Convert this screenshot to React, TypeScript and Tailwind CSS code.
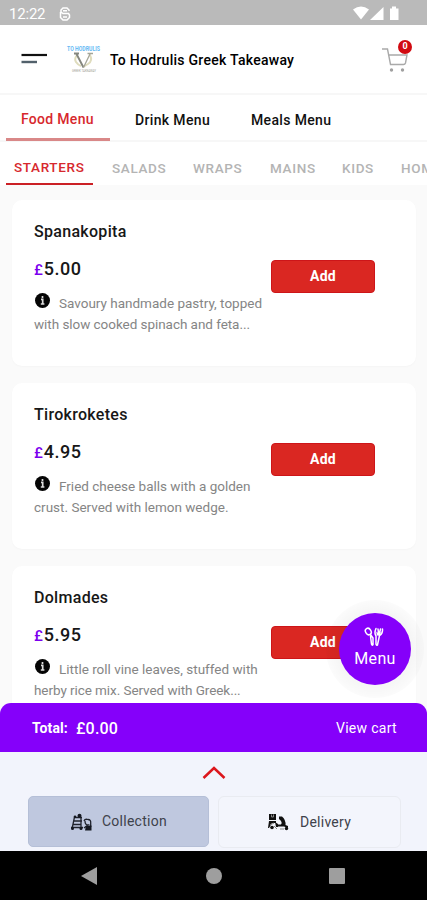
import React from "react";

type Dish = { name: string; price: string; lines: [string, string]; second: string };

const dishes: Dish[] = [
  {
    name: "Spanakopita",
    price: "5.00",
    lines: ["Savoury handmade pastry, topped", "with slow cooked spinach and feta..."],
    second: "tracking-[-0.05px]",
  },
  {
    name: "Tirokroketes",
    price: "4.95",
    lines: ["Fried cheese balls with a golden", "crust. Served with lemon wedge."],
    second: "tracking-normal",
  },
  {
    name: "Dolmades",
    price: "5.95",
    lines: ["Little roll vine leaves, stuffed with", "herby rice mix. Served with Greek..."],
    second: "tracking-[-0.07px]",
  },
];

function StatusBar() {
  return (
    <div className="flex h-[25px] shrink-0 items-center bg-[#bababa] pt-[2px] pl-[9px] text-white">
      <span className="w-[50px] text-[15px] leading-5 tracking-[-0.2px]">12:22</span>
      <svg width="12" height="14" viewBox="0 0 12 14" fill="none" stroke="#fff" strokeWidth="1.5">
        <path d="M10 4V3L8 1H4L2 3V5L4 6.5H9.5L10.5 8V10.5L8 13H4L1.5 10.5V5M4 3.8H8M4 10H8" />
      </svg>
      <svg className="ml-[282px]" width="48" height="15" viewBox="0 0 48 15" fill="#fff">
        <path d="M0 3.5Q8-2.5 16 3.5L8 13.5ZM17 14 30.5 1V14ZM37 2.5H39V.5H43V2.5H45.5V14H37Z" />
      </svg>
    </div>
  );
}

function Logo() {
  return (
    <svg className="ml-[19px] overflow-visible" width="36" height="30" viewBox="0 0 36 30">
      <text x="1" y="7" textLength="33" lengthAdjust="spacingAndGlyphs" fontSize="7" fontWeight="700" fill="#67baf4" fontFamily="Roboto, sans-serif">TO HODRULIS</text>
      <g fill="none">
        <path d="M11 11Q8 15 10 18Q12 21 15 22M24 11Q27 17 22 20L17 23" stroke="#dfdcbd" strokeWidth="2" />
        <path d="M8 9.5H13M10.5 10 17.5 23.5" stroke="#85877f" strokeWidth="1.9" />
        <path d="M17.5 23.5 24 10M21.5 9.5H27" stroke="#a4a598" strokeWidth="1.3" />
      </g>
      <text x="6" y="28" textLength="24" lengthAdjust="spacingAndGlyphs" fontSize="3.5" fill="#a3a397" fontFamily="Roboto, sans-serif">GREEK TAKEAWAY</text>
    </svg>
  );
}

function Header() {
  return (
    <header className="flex h-[70px] shrink-0 items-center border-b-2 border-[#f7f7f7] bg-white pl-[21px]">
      <svg width="26" height="12" viewBox="0 0 26 12">
        <path d="M0.5 2H26" stroke="#111" strokeWidth="2.2" />
        <path d="M0.5 9H16" stroke="#52616b" strokeWidth="2.4" />
      </svg>
      <Logo />
      <h1 className="ml-[8px] w-[272px] pt-[2px] text-[14px] font-medium tracking-[0.27px] text-black">To Hodrulis Greek Takeaway</h1>
      <div className="relative mt-[2px] h-[26px] w-[30px]">
        <svg width="30" height="26" viewBox="0 0 30 26" fill="none" stroke="#a9a9a9" strokeWidth="1.4">
          <path d="M0 2H5.5L8.5 17.5H21.5Q23 17.5 23.5 16L25 8H7" />
          <circle cx="9.5" cy="23" r="1.7" fill="#a0a0a0" stroke="none" />
          <circle cx="20.5" cy="23" r="1.7" fill="#a0a0a0" stroke="none" />
        </svg>
        <span className="absolute -top-[7px] left-[16px] flex size-[14px] items-center justify-center rounded-full bg-[#d10a10] text-[9px] font-bold text-white">0</span>
      </div>
    </header>
  );
}

function Tabs() {
  return (
    <nav className="flex h-[47px] shrink-0 border-b-2 border-[#f7f7f7] bg-white pl-[6px] text-[14px] font-medium text-[#111]">
      <div className="-mb-px w-[104px] border-b-[3px] border-[#d98888] pt-[14px] pl-[15px] text-[#d7282d]">
        <span className="tracking-[0.3px]">Food Menu</span>
      </div>
      <span className="w-[116px] pt-[15px] pl-[25px] tracking-[0.35px]">Drink Menu</span>
      <span className="pt-[15px] pl-[25px] tracking-[0.35px]">Meals Menu</span>
    </nav>
  );
}

function Categories() {
  return (
    <nav className="flex h-[43px] shrink-0 overflow-hidden bg-white pl-[6px] text-[13.5px] font-medium tracking-[0.65px] whitespace-nowrap text-[#b4b4b4]">
      <span className="w-[87px] shrink-0 border-b-2 border-[#cb2025] pt-[15px] pl-[8px] text-[#d7282d]">STARTERS</span>
      <span className="w-[81px] shrink-0 pt-[16px] pl-[19px]">SALADS</span>
      <span className="w-[77px] shrink-0 pt-[16px] pl-[19px]">WRAPS</span>
      <span className="w-[72px] shrink-0 pt-[16px] pl-[19px]">MAINS</span>
      <span className="w-[60px] shrink-0 pt-[16px] pl-[19px]">KIDS</span>
      <span className="shrink-0 pt-[16px] pl-[18px]">HOMEMADE</span>
    </nav>
  );
}

function DishCard({ dish }: { dish: Dish }) {
  return (
    <article className="flex h-[166px] shrink-0 rounded-[10px] bg-white pl-[22px] shadow-[0_1px_2px_rgba(0,0,0,0.025)]">
      <div className="w-[237px] shrink-0 pt-[21px] whitespace-nowrap">
        <h2 className="text-[16px] leading-[22px] font-medium tracking-[0.3px] text-[#171717]">{dish.name}</h2>
        <p className="mt-[15px] text-[18px] leading-[22px] font-medium text-[#171717]">
          <span className="text-[15px] text-[#7c00ee]">£</span>
          <span className="ml-[1px] tracking-[0.5px]">{dish.price}</span>
        </p>
        <div className="mt-[12px] flex h-[21px] text-[13.5px] leading-[21px] text-[#858585]">
          <svg className="mr-[9px] ml-px" width="15" height="16" viewBox="0 0 15 16">
            <circle cx="7.5" cy="7.5" r="7.5" fill="#050505" />
            <path d="M7.5 3V5M6 6.4H7.7V11M5.8 11H9.4" stroke="#ddd" strokeWidth="1.7" fill="none" />
          </svg>
          <span>{dish.lines[0]}</span>
        </div>
        <p className={`text-[13.5px] leading-[21px] text-[#858585] ${dish.second}`}>{dish.lines[1]}</p>
      </div>
      <button className="mt-[60px] h-[33px] w-[104px] shrink-0 rounded-[4px] border border-[#cd1519] bg-[#da2722] text-[14px] font-bold tracking-[0.3px] text-white">Add</button>
    </article>
  );
}

function MenuButton() {
  return (
    <button className="absolute top-[415px] left-[326px] flex size-[98px] items-center justify-center rounded-full bg-[radial-gradient(circle,rgba(0,0,0,0.035)_55%,rgba(0,0,0,0.015)_70%)]">
      <span className="flex size-[72px] flex-col items-center rounded-full bg-[#8500fa] pt-[14px] text-white">
        <svg className="-ml-[2px]" width="20" height="20" viewBox="0 0 20 20" fill="none" stroke="#fff" strokeWidth="1.5" strokeLinecap="round">
          <ellipse cx="4.3" cy="4.5" rx="2.7" ry="3.4" transform="rotate(-32 4.3 4.5)" />
          <path d="M6.5 7.5 9 11V17.5Q8 19 7.5 17L6.5 9M18.5 2Q19 6.5 15.5 8.5L13.5 18Q12.5 19 12 17V9Q10 6 12 1.5M14 2 14.5 6M16.5 2 15 8" />
          <path d="M12.3 4.5Q14.5 7 18 4.5L15 8.5H12.8Z" fill="#fff" stroke="none" />
        </svg>
        <span className="mt-[3px] text-[16px] leading-[18px] tracking-[0.3px]">Menu</span>
      </span>
    </button>
  );
}

function CollectionIcon() {
  return (
    <svg width="22" height="18" viewBox="0 0 22 18" fill="none" stroke="#20232d" strokeWidth="1.3">
      <path d="M4 4.5H12M3.5 8H12M3 11.5H11M4.5 4 2 16M11 4V16M1 14.5H13" />
      <circle cx="9.5" cy="2.7" r="2" fill="#151821" stroke="none" />
      <circle cx="5" cy="3.8" r="1.3" fill="#151821" stroke="none" />
      <circle cx="2.5" cy="15.5" r="1.5" fill="#151821" stroke="none" />
      <circle cx="11" cy="15.5" r="1.5" fill="#151821" stroke="none" />
      <path d="M14 8Q15 5.5 18 6.5Q21 6.5 20.7 10V14M15 8Q15 12 18 12L14 15" />
      <path d="M16 12.5H21.5V17.5H15Z" fill="#151821" stroke="none" />
    </svg>
  );
}

function DeliveryIcon() {
  return (
    <svg width="21" height="18" viewBox="0 0 21 18">
      <g fill="#111">
        <path d="M1 1H8V7H1ZM1 8H8V10H4L1 15H0ZM7 9 10 11V14H8ZM11 3.5H14Q18 7 17.5 12L20 13V15L16 13.5H10V11.5H13Q15 9 11 6Z" />
        <circle cx="4" cy="14.5" r="1.8" />
        <circle cx="18.5" cy="15.5" r="1.7" />
      </g>
      <path d="M3.5 1.5V4H5.5V1.5M2 12 6 10M6 13 9 16M12 16H16" stroke="#888" fill="none" />
    </svg>
  );
}

function BottomPanel() {
  return (
    <footer className="h-[148px] shrink-0 bg-[#f2f4fc]">
      <div className="flex h-[44px] items-start justify-center pt-[13px]">
        <svg width="24" height="14" viewBox="0 0 24 14" fill="none" stroke="#dc161c" strokeWidth="2.5">
          <path d="M1.5 13 12 3 22.5 13" />
        </svg>
      </div>
      <div className="flex h-[55px] pl-[28px] text-[14px] text-[#3e424b]">
        <button className="flex h-[51px] w-[181px] items-center rounded-[5px] border border-[#b5bfd7] bg-[#bfc8df] pl-[41px]">
          <CollectionIcon />
          <span className="ml-[10px] tracking-[0.25px]">Collection</span>
        </button>
        <button className="ml-[9px] flex h-[52px] w-[183px] items-center rounded-[6px] border border-[#e9ebf1] bg-[#f3f5fc] pl-[49px]">
          <DeliveryIcon />
          <span className="ml-[11px] tracking-[0.25px]">Delivery</span>
        </button>
      </div>
      <div className="flex h-[49px] items-center bg-black pl-[81px]">
        <svg width="16" height="18" viewBox="0 0 16 18" fill="#9e9e9e"><path d="M16 0V18L0 9Z" /></svg>
        <span className="ml-[109px] size-[16px] rounded-full bg-[#9e9e9e]" />
        <span className="ml-[107px] size-[16px] rounded-[1px] bg-[#9e9e9e]" />
      </div>
    </footer>
  );
}

export default function App() {
  return (
    <main className="flex h-[900px] w-[427px] flex-col overflow-hidden bg-[#fafafa] font-[Roboto,sans-serif]">
      <StatusBar />
      <Header />
      <Tabs />
      <Categories />
      <div className="relative h-[567px] shrink-0 overflow-hidden">
        <div className="flex h-[567px] flex-col gap-[17px] pt-[15px] pr-[11px] pl-[12px]">
          {dishes.map((dish) => (
            <DishCard key={dish.name} dish={dish} />
          ))}
        </div>
        <MenuButton />
        <div className="absolute inset-x-0 bottom-0 flex h-[49px] items-center rounded-t-[11px] bg-[#8500fa] pt-[2px] pr-[30px] pl-[32px] text-white">
          <span className="w-[44px] text-[14px] font-bold tracking-[0.1px]">Total:</span>
          <span className="text-[16px] font-medium tracking-[0.2px]">£0.00</span>
          <span className="ml-auto text-[14px] tracking-[0.3px]">View cart</span>
        </div>
      </div>
      <BottomPanel />
    </main>
  );
}
